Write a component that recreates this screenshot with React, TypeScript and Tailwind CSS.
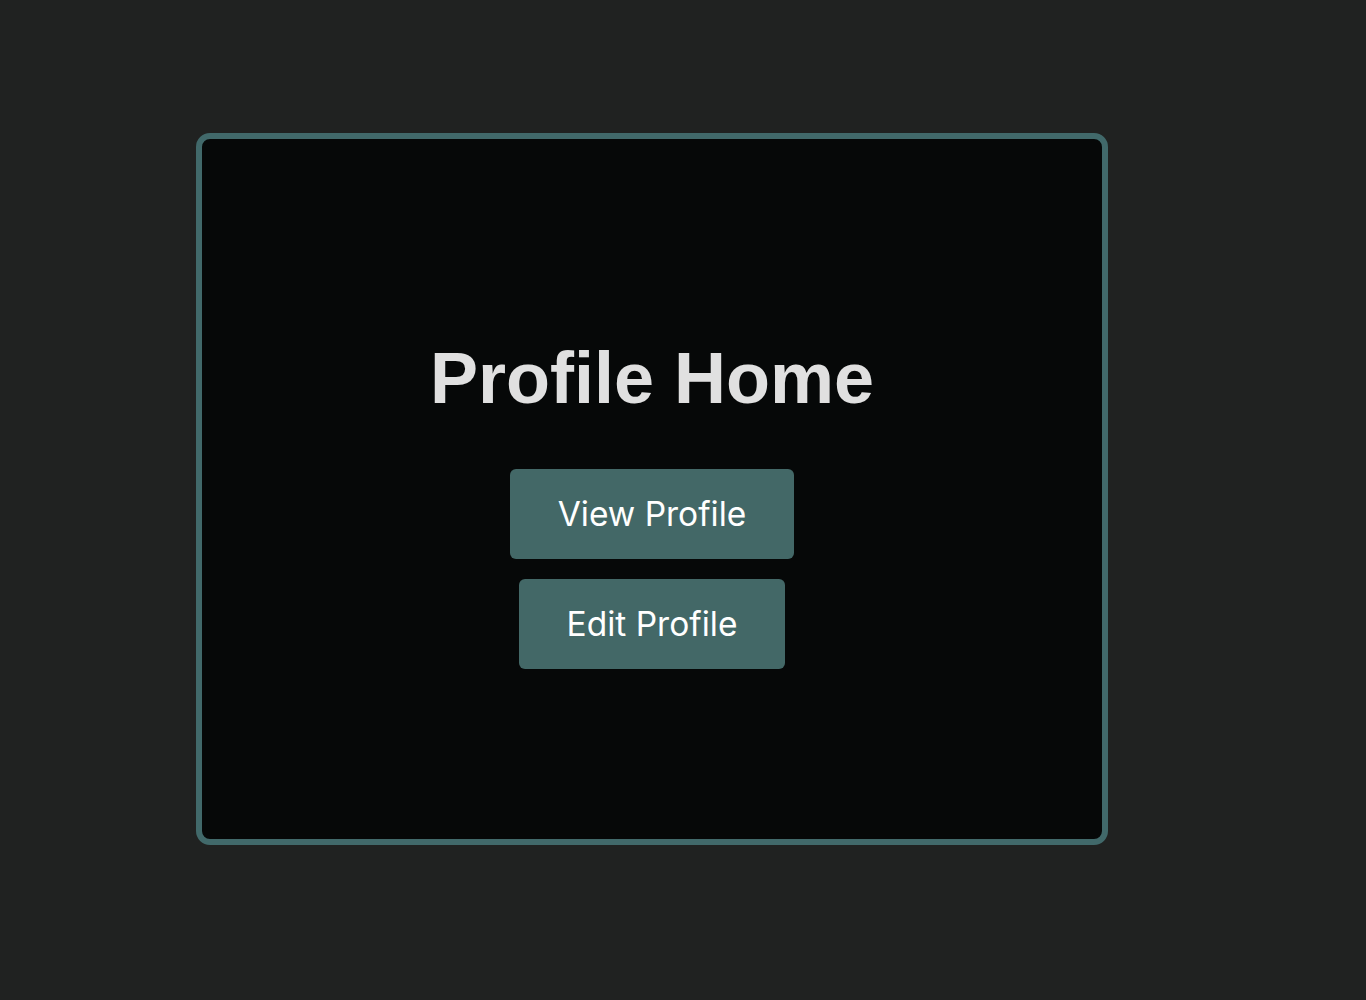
const ProfileHome = () => {
  return (
    <div className="min-h-[1000px] w-full bg-[#202221] pt-[133px] pl-[196px]">
      <div className="flex h-[712px] w-[912px] flex-col items-center justify-center rounded-[14px] border-[6px] border-[#41696a] bg-[#060808] pt-[28px]">
        <h1 className="mb-[50px] font-['Liberation_Sans',Arial,sans-serif] text-[72px] leading-[1.15] font-bold text-[#e0e0e0]">
          Profile Home
        </h1>

        <div className="flex flex-col items-center gap-5 font-['Inter',sans-serif]">
          <button className="flex h-[90px] items-center rounded-md bg-[#436867] px-12 text-[33.5px] text-white">
            View Profile
          </button>
          <button className="flex h-[90px] items-center rounded-md bg-[#436867] px-12 text-[33.5px] text-white">
            Edit Profile
          </button>
        </div>
      </div>
    </div>
  )
}

export default function App() {
  return <ProfileHome />
}
